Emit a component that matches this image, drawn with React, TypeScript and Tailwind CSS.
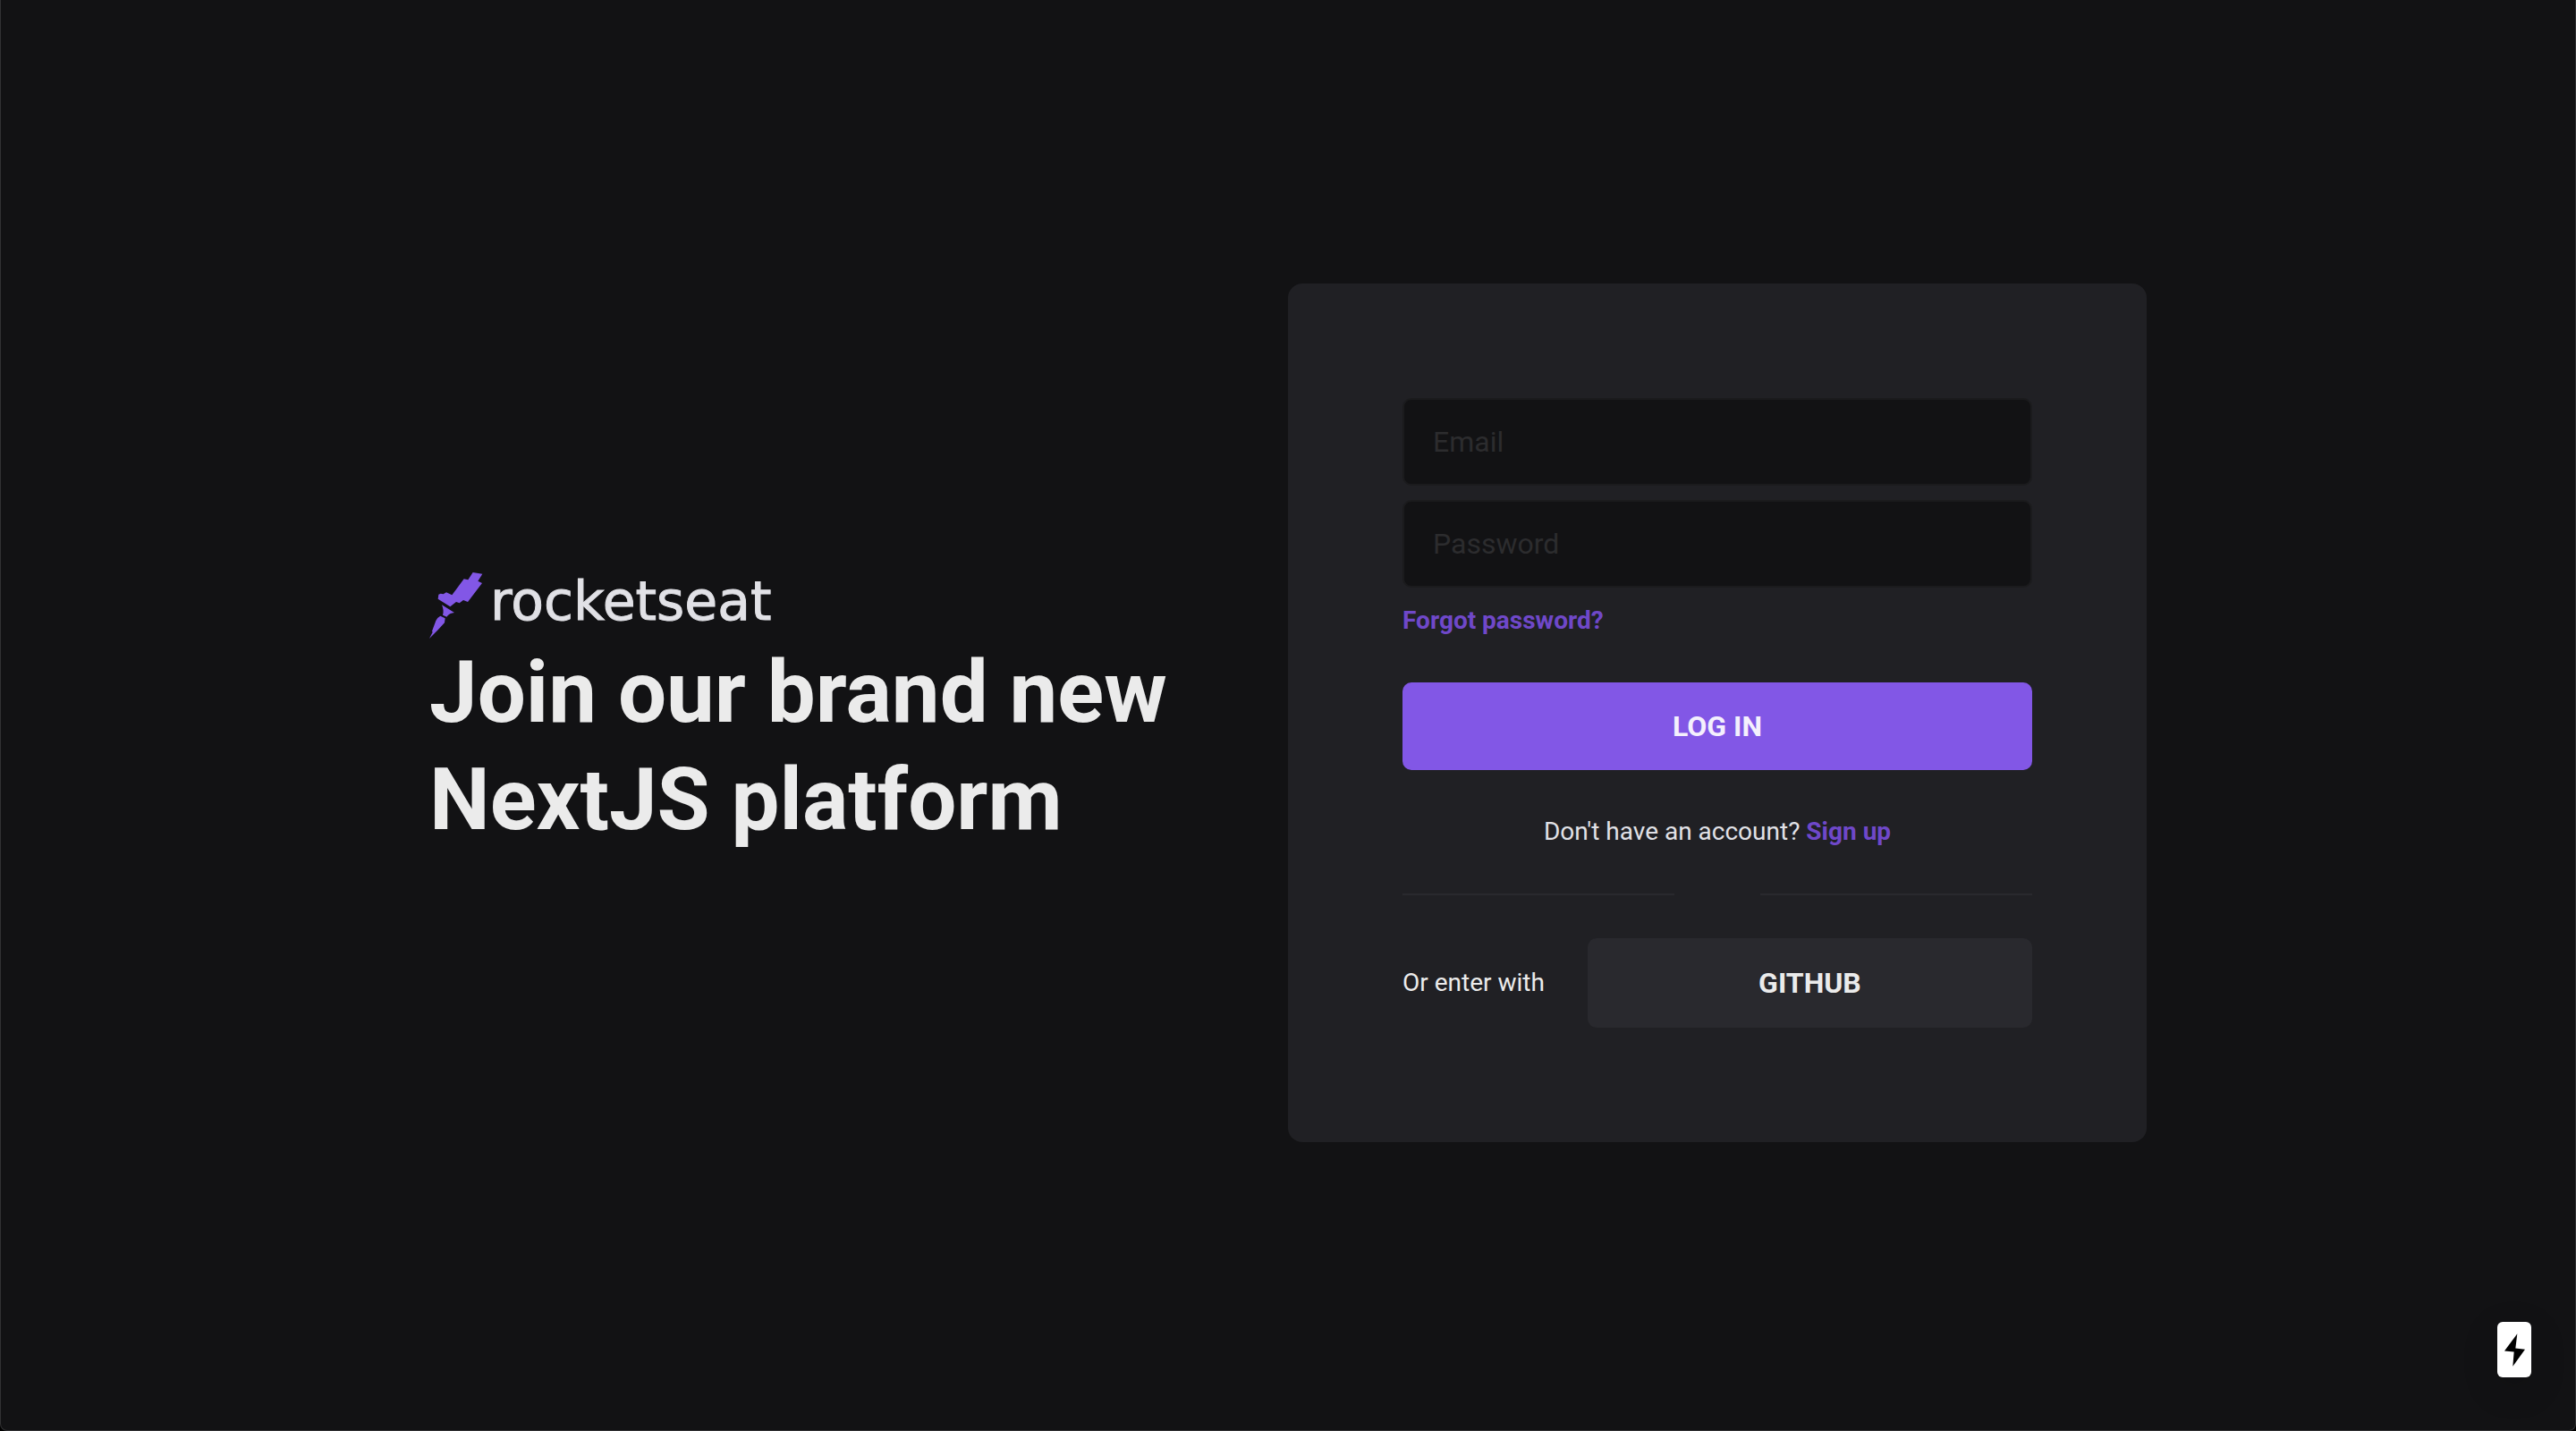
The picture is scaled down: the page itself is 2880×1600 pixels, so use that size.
function RocketMark() {
  return (
    <svg viewBox="30 44 180 222" className="h-[74px] w-[60px] shrink-0 fill-[#8257e6]" aria-hidden="true">
      <path d="M176 44 L208 49 L193 73 L207 80 L159 143 L144 137 L131 147 L120 143 L100 159 L59 133 L61 118 L68 115 L77 117 L87 111 L106 120 L146 66 L160 69 Z" />
      <path d="M72 153 L114 179 Q98 180 88 193 L75 187 Q80 172 72 153 Z" />
      <path d="M67 190 L83 198 L81 213 L59 237 L30 266 L41 244 L39 241 L52 206 Q58 194 67 190 Z" />
    </svg>
  );
}

function Logo() {
  return (
    <div className="flex h-[74px] items-start gap-2">
      <RocketMark />
      <span className="font-['DejaVu_Sans',sans-serif] text-6xl leading-[64px] text-[#e1e1e6] [-webkit-text-stroke:1px_#e1e1e6]">rocketseat</span>
    </div>
  );
}

function Field({ id, type, label }: { id: string; type: string; label: string }) {
  return (
    <input
      id={id}
      type={type}
      placeholder={label}
      aria-label={label}
      className="h-[98px] w-full rounded-[10px] border-2 border-[#1b1b1d] bg-[#121214] px-8 text-[32px] text-[#e1e1e6] outline-none placeholder:text-[#2c2c2e]"
    />
  );
}

function LoginCard() {
  return (
    <section className="flex flex-col rounded-2xl bg-[#202024] p-32 text-[28px] leading-[42px]">
      <form className="flex flex-col" onSubmit={(e) => e.preventDefault()}>
        <div className="flex flex-col gap-4">
          <Field id="email" type="email" label="Email" />
          <Field id="password" type="password" label="Password" />
          <a href="#forgot" className="self-start font-bold text-[#6f48c9]">Forgot password?</a>
        </div>
        <button type="submit" className="mt-12 h-[98px] rounded-[10px] bg-[#8257e6] text-[32px] font-bold text-[#f4f0fd]">
          LOG IN
        </button>
      </form>
      <p className="mt-12 text-center text-[#e1e1e6]">
        Don't have an account? <a href="#signup" className="font-bold text-[#6f48c9]">Sign up</a>
      </p>
      <div className="mt-12 flex gap-24" role="separator">
        <span className="h-0.5 flex-1 bg-[#29292e]" />
        <span className="h-0.5 flex-1 bg-[#29292e]" />
      </div>
      <div className="mt-12 flex items-center gap-12">
        <span className="text-[#ebebeb]">Or enter with</span>
        <button type="button" className="h-[100px] flex-1 rounded-[10px] bg-[#29292e] text-[32px] font-bold text-[#ebebeb]">
          GITHUB
        </button>
      </div>
    </section>
  );
}

export default function App() {
  return (
    <div className="min-h-screen bg-black">
      <main className="flex min-h-screen items-center justify-center rounded-b-lg border-x border-b border-[#323234] bg-[#121214] pb-1.5 font-['Roboto',sans-serif]">
        <div className="grid w-full max-w-[1920px] grid-cols-2 items-center">
          <div className="flex flex-col">
            <Logo />
            <h1 className="text-8xl leading-[120px] font-bold text-[#ebebeb]">Join our brand new NextJS platform</h1>
          </div>
          <LoginCard />
        </div>
      </main>
      <div className="fixed right-[50px] bottom-[60px] flex h-[62px] w-[38px] items-center justify-center rounded-md bg-white shadow-[0_12px_40px_rgba(0,0,0,0.15)]">
        <svg viewBox="119 92 69 110" className="h-[37px] w-[23px]" aria-hidden="true">
          <path d="M162 92 L156 141 L188 145 L147 202 L151 153 L119 150 Z" />
        </svg>
      </div>
    </div>
  );
}
